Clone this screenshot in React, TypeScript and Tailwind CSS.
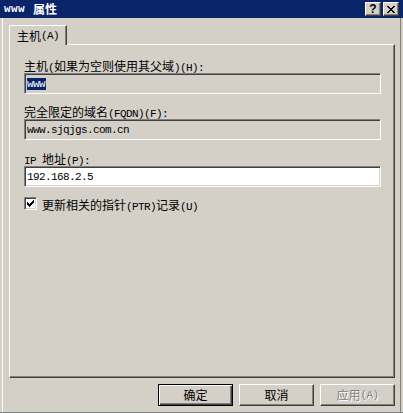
import React from "react";

const CJK_TEST = /[\u2E80-\u9FFF\uFF00-\uFFEF\u3000-\u303F]/;
const SPLIT = /[\u2E80-\u9FFF\uFF00-\uFFEF\u3000-\u303F]+|[^\u2E80-\u9FFF\uFF00-\uFFEF\u3000-\u303F]+/g;

const LATIN = "font-['Liberation_Mono',monospace] text-[11px] tracking-[-0.6px]";
const CJK = "font-['Noto_Sans_CJK_SC','Noto_Sans_CJK_JP',sans-serif] text-[12px]";

function Mixed({ text }: { text: string }) {
  const parts = text.match(SPLIT) || [];
  return (
    <>
      {parts.map((p, i) =>
        CJK_TEST.test(p) ? (
          <span key={i} className={CJK}>
            {p}
          </span>
        ) : (
          <span key={i} className={LATIN}>
            {p}
          </span>
        )
      )}
    </>
  );
}

function Pix({ rows, w, h }: { rows: string[]; w: number; h: number }) {
  const rects: React.ReactNode[] = [];
  rows.forEach((r, y) => {
    for (let x = 0; x < r.length; x++) {
      if (r[x] === "X") rects.push(<rect key={`${x}-${y}`} x={x} y={y} width={1} height={1} fill="#000" />);
    }
  });
  return (
    <svg width={w} height={h} viewBox={`0 0 ${w} ${h}`} shapeRendering="crispEdges">
      {rects}
    </svg>
  );
}

const CLOSE = ["XX....XX", ".XX..XX.", "..XXXX..", "...XX...", "..XXXX..", ".XX..XX.", "XX....XX"];
const CHECK = ["......X", ".....XX", "X...XXX", "XX.XXX.", "XXXXX..", ".XXX...", "..X...."];

function TitleBtn({ children }: { children: React.ReactNode }) {
  return (
    <div className="w-[16px] h-[14px] bg-[#d4d0c8] border border-t-white border-l-white border-r-[#404040] border-b-[#404040] shadow-[inset_-1px_-1px_0_#808080] flex items-center justify-center">
      {children}
    </div>
  );
}

function Label({ text }: { text: string }) {
  return (
    <div className="h-[12px] leading-[12px] whitespace-pre text-black">
      <Mixed text={text} />
    </div>
  );
}

function Field({ white, children }: { white?: boolean; children: React.ReactNode }) {
  return (
    <div
      className={
        (white ? "bg-white " : "bg-[#d4d0c8] ") +
        "mt-[2px] w-[357px] h-[21px] border border-t-[#808080] border-l-[#808080] border-r-white border-b-white shadow-[inset_1px_1px_0_#404040,inset_-1px_-1px_0_#d4d0c8] flex items-center pl-[2px] leading-[12px] whitespace-pre text-black"
      }
    >
      {children}
    </div>
  );
}

function Button({ text, def, disabled }: { text: string; def?: boolean; disabled?: boolean }) {
  const base = "w-[75px] h-[22px] flex items-center justify-center leading-[12px] whitespace-pre ";
  const bevel = def
    ? "border border-black shadow-[inset_1px_1px_0_#fff,inset_-1px_-1px_0_#404040,inset_-2px_-2px_0_#808080] "
    : "border border-t-white border-l-white border-r-[#404040] border-b-[#404040] shadow-[inset_-1px_-1px_0_#808080] ";
  const color = disabled ? "text-[#808080] [text-shadow:1px_1px_0_#fff]" : "text-black";
  return (
    <div className={base + bevel + color}>
      <Mixed text={text} />
    </div>
  );
}

export default function App() {
  return (
    <div className="w-[403px] h-[413px] bg-[#d4d0c8] flex flex-col overflow-hidden select-none">
      <div className="h-[18px] shrink-0 bg-[#0a246a] flex items-center pl-[4px] pr-[4px]">
        <span className="text-white font-bold font-['Liberation_Mono',monospace] text-[11px] tracking-[0.4px] leading-[12px]">
          www
        </span>
        <span className="ml-[8px] text-white font-bold font-['Noto_Sans_CJK_SC',sans-serif] text-[12px] leading-[12px]">
          属性
        </span>
        <div className="ml-auto flex gap-[2px]">
          <TitleBtn>
            <span className="font-['Liberation_Sans',sans-serif] font-bold text-[12px] leading-[12px] text-black">?</span>
          </TitleBtn>
          <TitleBtn>
            <Pix rows={CLOSE} w={8} h={7} />
          </TitleBtn>
        </div>
      </div>

      <div className="flex-1 flex flex-col pl-[2px] pr-[2px] border-b border-[#808080]">
        <div className="flex-1 flex flex-col border-l border-white border-r border-r-[#808080] pl-[6px] pr-[5px] pt-[7px]">
          <div className="flex">
            <div className="relative z-10 -mb-[1px] w-[58px] h-[20px] bg-[#d4d0c8] border-t border-l border-white border-r border-r-[#404040] shadow-[inset_-1px_0_0_#808080] flex items-center justify-center leading-[12px] whitespace-pre text-black">
              <Mixed text="主机(A)" />
            </div>
          </div>

          <div className="h-[334px] border border-t-white border-l-white border-r-[#404040] border-b-[#404040] shadow-[inset_-1px_-1px_0_#808080] pl-[14px] pt-[14px] flex flex-col items-start">
            <Label text="主机(如果为空则使用其父域)(H):" />
            <Field>
              <span className={"bg-[#0a246a] text-white pr-[1px] " + LATIN}>www</span>
            </Field>

            <div className="mt-[11px]">
              <Label text="完全限定的域名(FQDN)(F):" />
            </div>
            <Field>
              <span className={LATIN}>www.sjqjgs.com.cn</span>
            </Field>

            <div className="mt-[12px]">
              <Label text="IP 地址(P):" />
            </div>
            <Field white>
              <span className={LATIN}>192.168.2.5</span>
            </Field>

            <div className="mt-[10px] flex items-center h-[13px]">
              <div className="w-[13px] h-[13px] bg-white border border-t-[#808080] border-l-[#808080] border-r-white border-b-white shadow-[inset_1px_1px_0_#404040,inset_-1px_-1px_0_#d4d0c8] flex items-center justify-center">
                <Pix rows={CHECK} w={7} h={7} />
              </div>
              <div className="ml-[5px] h-[12px] leading-[12px] whitespace-pre text-black">
                <Mixed text="更新相关的指针(PTR)记录(U)" />
              </div>
            </div>
          </div>

          <div className="mt-[6px] flex justify-end gap-[6px]">
            <Button text="确定" def />
            <Button text="取消" />
            <Button text="应用(A)" disabled />
          </div>
        </div>
      </div>
    </div>
  );
}
